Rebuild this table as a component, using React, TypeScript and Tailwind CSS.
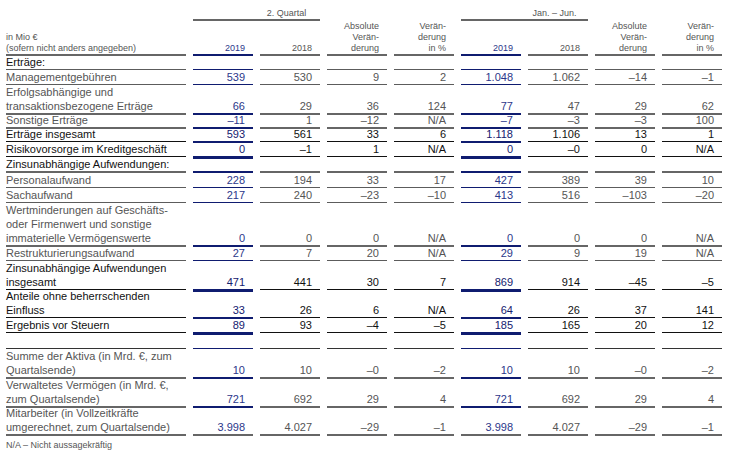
type Kind = "thin" | "thick" | "total2" | "total3" | "allGray" | "blank";

type Row = {
  label: string[];
  values?: string[];
  strong?: boolean;
  kind: Kind;
  h: string;
};

const rows: Row[] = [
  { label: ["Erträge:"], strong: true, kind: "thin", h: "h-[15px]" },
  { label: ["Managementgebühren"], values: ["539", "530", "9", "2", "1.048", "1.062", "–14", "–1"], kind: "thin", h: "h-[15px]" },
  {
    label: ["Erfolgsabhängige und", "transaktionsbezogene Erträge"],
    values: ["66", "29", "36", "124", "77", "47", "29", "62"],
    kind: "thick",
    h: "h-[28px]",
  },
  { label: ["Sonstige Erträge"], values: ["–11", "1", "–12", "N/A", "–7", "–3", "–3", "100"], kind: "thick", h: "h-[14px]" },
  { label: ["Erträge insgesamt"], values: ["593", "561", "33", "6", "1.118", "1.106", "13", "1"], strong: true, kind: "total2", h: "h-[15px]" },
  { label: ["Risikovorsorge im Kreditgeschäft"], values: ["0", "–1", "1", "N/A", "0", "–0", "0", "N/A"], strong: true, kind: "total3", h: "h-[15px]" },
  { label: ["Zinsunabhängige Aufwendungen:"], strong: true, kind: "thick", h: "h-[16px]" },
  { label: ["Personalaufwand"], values: ["228", "194", "33", "17", "427", "389", "39", "10"], kind: "thin", h: "h-[15px]" },
  { label: ["Sachaufwand"], values: ["217", "240", "–23", "–10", "413", "516", "–103", "–20"], kind: "thin", h: "h-[15px]" },
  {
    label: ["Wertminderungen auf Geschäfts-", "oder Firmenwert und sonstige", "immaterielle Vermögenswerte"],
    values: ["0", "0", "0", "N/A", "0", "0", "0", "N/A"],
    kind: "thick",
    h: "h-[43px]",
  },
  { label: ["Restrukturierungsaufwand"], values: ["27", "7", "20", "N/A", "29", "9", "19", "N/A"], kind: "thin", h: "h-[15px]" },
  {
    label: ["Zinsunabhängige Aufwendungen", "insgesamt"],
    values: ["471", "441", "30", "7", "869", "914", "–45", "–5"],
    strong: true,
    kind: "total3",
    h: "h-[28px]",
  },
  {
    label: ["Anteile ohne beherrschenden", "Einfluss"],
    values: ["33", "26", "6", "N/A", "64", "26", "37", "141"],
    strong: true,
    kind: "total2",
    h: "h-[29px]",
  },
  { label: ["Ergebnis vor Steuern"], values: ["89", "93", "–4", "–5", "185", "165", "20", "12"], strong: true, kind: "total3", h: "h-[15px]" },
  { label: [""], kind: "blank", h: "h-[16px]" },
  {
    label: ["Summe der Aktiva (in Mrd. €, zum", "Quartalsende)"],
    values: ["10", "10", "–0", "–2", "10", "10", "–0", "–2"],
    kind: "thick",
    h: "h-[29px]",
  },
  {
    label: ["Verwaltetes Vermögen (in Mrd. €,", "zum Quartalsende)"],
    values: ["721", "692", "29", "4", "721", "692", "29", "4"],
    kind: "thick",
    h: "h-[28px]",
  },
  {
    label: ["Mitarbeiter (in Vollzeitkräfte", "umgerechnet, zum Quartalsende)"],
    values: ["3.998", "4.027", "–29", "–1", "3.998", "4.027", "–29", "–1"],
    kind: "allGray",
    h: "h-[29px]",
  },
];

const otherBorder: Record<Kind, string> = {
  thin: "border-b border-[#5c5c5c]",
  blank: "border-b border-[#333]",
  thick: "border-b-2 border-[#666]",
  total2: "border-b border-[#111]",
  total3: "border-b border-[#111]",
  allGray: "border-b-2 border-[#666]",
};

const blueBorder: Record<Kind, string> = {
  thin: "border-b border-[#0f1c70]",
  blank: "border-b border-[#0f1c70]",
  thick: "border-b-2 border-[#0f1c70]",
  total2: "border-b-2 border-[#0f1c70] -mb-px",
  total3: "border-b-[3px] border-[#0f1c70] -mb-[2px]",
  allGray: "border-b-2 border-[#666]",
};

const grid = "grid grid-cols-[180px_repeat(8,60px)] gap-x-[7px] pl-[6px]";

function TableRow({ row }: { row: Row }) {
  const labelColor = row.strong ? "text-[#111]" : "text-[#555]";
  const numColor = row.strong ? "text-[#111]" : "text-[#555]";
  const blueColor = row.strong ? "text-[#14206e]" : "text-[#2b378a]";
  return (
    <div className={`${grid} ${row.h}`}>
      <div className={`flex flex-col justify-end ${otherBorder[row.kind]} ${labelColor}`}>
        {row.label.map((l, i) => (
          <div key={i} className="whitespace-nowrap">
            {l}
          </div>
        ))}
      </div>
      {Array.from({ length: 8 }).map((_, i) => {
        const v = row.values ? row.values[i] : "";
        const first = i === 0 || i === 4;
        const border = i === 0 || i === 4 ? blueBorder[row.kind] : otherBorder[row.kind];
        const color = first ? blueColor : numColor;
        return (
          <div key={i} className={`flex flex-col justify-end items-end pr-2 ${border} ${color}`}>
            {v}
          </div>
        );
      })}
    </div>
  );
}

function HeadCell({ lines, blue }: { lines: string[]; blue?: boolean }) {
  return (
    <div
      className={`flex flex-col justify-end items-end pr-2 border-b-2 ${
        blue ? "border-[#0f1c70] text-[#2b378a]" : "border-[#666] text-[#555]"
      }`}
    >
      {lines.map((l, i) => (
        <div key={i}>{l}</div>
      ))}
    </div>
  );
}

export default function App() {
  return (
    <div
      className="w-[734px] h-[460px] bg-white text-[11px] leading-[14px] overflow-hidden"
      style={{ fontFamily: '"Liberation Sans", Arial, sans-serif' }}
    >
      {/* column groups */}
      <div className={`${grid} h-[21px] text-[9px] leading-[11px] text-[#555]`}>
        <div />
        <div className="col-span-2 grid grid-cols-[60px_67px] border-b-2 border-[#666]">
          <div />
          <div className="flex items-end justify-center">2. Quartal</div>
        </div>
        <div />
        <div />
        <div className="col-span-2 grid grid-cols-[60px_67px] border-b-2 border-[#666]">
          <div />
          <div className="flex items-end justify-center">Jan. – Jun.</div>
        </div>
        <div />
        <div />
      </div>

      {/* header */}
      <div className={`${grid} h-[34px] text-[9px] leading-[11px]`}>
        <div className="flex flex-col justify-end border-b-2 border-[#666] text-[#555]">
          <div>in Mio €</div>
          <div>(sofern nicht anders angegeben)</div>
        </div>
        <HeadCell lines={["2019"]} blue />
        <HeadCell lines={["2018"]} />
        <HeadCell lines={["Absolute", "Verän-", "derung"]} />
        <HeadCell lines={["Verän-", "derung", "in %"]} />
        <HeadCell lines={["2019"]} blue />
        <HeadCell lines={["2018"]} />
        <HeadCell lines={["Absolute", "Verän-", "derung"]} />
        <HeadCell lines={["Verän-", "derung", "in %"]} />
      </div>

      {rows.map((r, i) => (
        <TableRow key={i} row={r} />
      ))}

      <div className="pl-[6px] pt-[5px] text-[9px] leading-[11px] text-[#555]">N/A – Nicht aussagekräftig</div>
    </div>
  );
}
